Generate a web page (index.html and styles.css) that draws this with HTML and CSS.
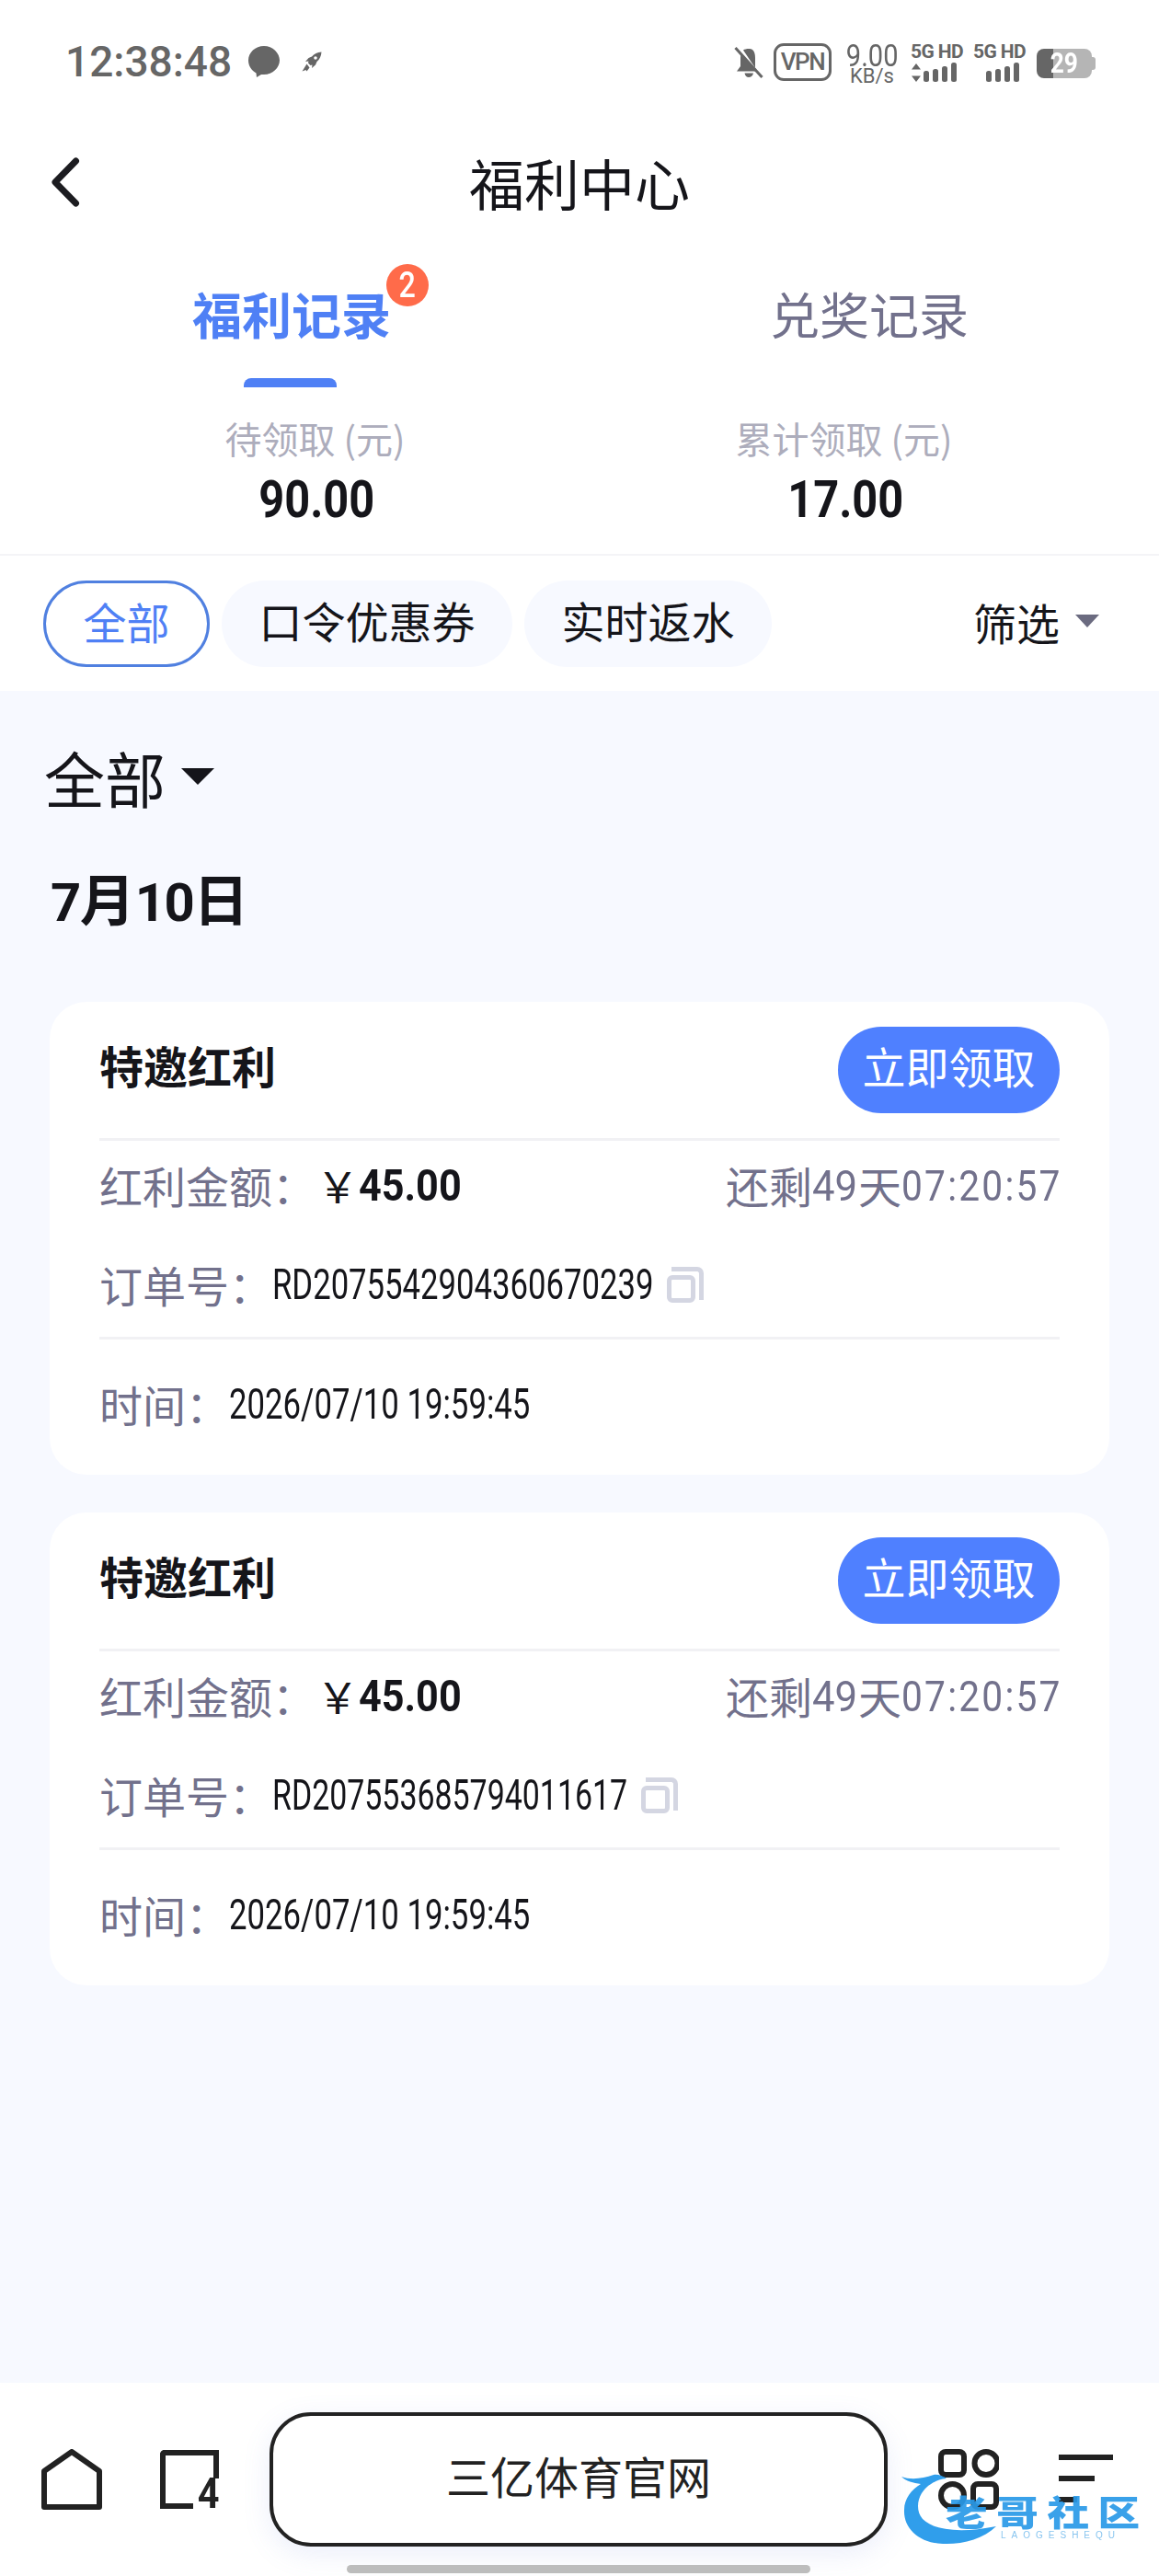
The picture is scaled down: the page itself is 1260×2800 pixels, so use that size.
FILE: index.html
```html
<!DOCTYPE html>
<html lang="zh-CN">
<head>
    <meta charset="UTF-8">
    <meta name="viewport" content="width=device-width, initial-scale=1.0">
    <title>福利中心</title>
    <link rel="stylesheet" href="styles.css">
</head>
<body>
    <div class="page">
        <header class="top">
            <div class="status">
                <div class="status_left">
                    <span class="clock">12:38:48</span>
                    <svg class="bubble" viewBox="0 0 34 34"><path d="M17 0C7.600 0 0 7 0 15.600c0 6.400 3.600 11.200 8.500 13.900l.5 4.500 5-3.100c1 .1 2 .2 3 .2 9.400 0 17-7.600 17-15.500S26.400 0 17 0z"/></svg>
                    <svg class="rocket" viewBox="0 0 22 22"><path d="M21.500.5c-4.500.3-8 2-10.500 5L7.500 7 4 11l3.500-.5-.5 2 2.500 2.500 2-.5L11 18l4-3.500 1.500-3.500c3-2.500 4.700-6 5-10.500zM15 5.200a1.800 1.800 0 1 1 0 3.600 1.800 1.800 0 0 1 0-3.600zM5.500 13.500L.5 21.500l4-1.500 1 1.500 3-4z"/></svg>
                </div>
                <div class="status_right">
                    <svg class="bell" viewBox="0 0 32 36"><path d="M16 3c-2.500 0-4.500.5-6 1.500L25.500 27.500H3L7 22v-9c0-1.500.2-3 .7-4.400L23 26V13c0-4-1-7.500-3-9-1-.7-2.500-1-4-1zM11.500 29.500c.5 3 2.500 4.500 4.500 4.500s4.500-1.500 5-4.500z"/><path d="M1.500 2L30.500 34" stroke="#666" stroke-width="3" fill="none"/></svg>
                    <span class="vpn">VPN</span>
                    <div class="speed"><span class="speed_num">9.00</span><span class="speed_unit">KB/s</span></div>
                    <div class="signal">
                        <span class="signal_name">5G HD</span>
                        <svg viewBox="0 0 57 22"><path d="M6 1l5 6.500H1zM6 21l5-6.500H1z"/><rect x="14" y="9" width="6" height="12" rx="2.500"/><rect x="24" y="7" width="6" height="14" rx="2.500"/><rect x="34" y="4" width="6" height="17" rx="2.500"/><rect x="44" y="0" width="6" height="21" rx="2.500"/></svg>
                    </div>
                    <div class="signal signal_last">
                        <span class="signal_name">5G HD</span>
                        <svg viewBox="0 0 57 22"><rect x="14" y="9" width="6" height="12" rx="2.500"/><rect x="24" y="7" width="6" height="14" rx="2.500"/><rect x="34" y="4" width="6" height="17" rx="2.500"/><rect x="44" y="0" width="6" height="21" rx="2.500"/></svg>
                    </div>
                    <div class="battery"><span class="battery_num">29</span></div>
                </div>
            </div>

            <div class="navbar">
                <svg class="back" viewBox="0 0 32 54"><path d="M27.500 4L5 27l22.500 23" fill="none" stroke="#1c1c20" stroke-width="7" stroke-linecap="round" stroke-linejoin="round"/></svg>
                <h1 class="navbar_title">福利中心</h1>
            </div>

            <div class="tabs">
                <div class="tab tab_active">
                    <span class="tab_label">福利记录<span class="tab_badge"><span class="tab_badge_num">2</span></span></span>
                </div>
                <div class="tab"><span class="tab_label">兑奖记录</span></div>
            </div>

            <div class="stats">
                <div class="stat">
                    <div class="stat_label">待领取 (元)</div>
                    <div class="stat_value">90.00</div>
                </div>
                <div class="stat">
                    <div class="stat_label">累计领取 (元)</div>
                    <div class="stat_value">17.00</div>
                </div>
            </div>

            <div class="filters">
                <span class="chip chip_active">全部</span>
                <span class="chip">口令优惠券</span>
                <span class="chip">实时返水</span>
                <span class="filters_more">筛选<i class="caret"></i></span>
            </div>
        </header>

        <main class="list">
            <div class="list_type">全部<i class="caret caret_big"></i></div>
            <div class="list_date"><span class="date_num">7</span>月<span class="date_num">10</span>日</div>

            <section class="card">
                <div class="card_head">
                    <span class="card_title">特邀红利</span>
                    <span class="card_btn">立即领取</span>
                </div>
                <div class="card_body">
                    <div class="row">
                        <span class="row_label">红利金额：</span>
                        <span class="yen">￥</span><span class="amount">45.00</span>
                        <span class="countdown">还剩<span class="num num_days">49</span>天<span class="num num_time">07:20:57</span></span>
                    </div>
                    <div class="row">
                        <span class="row_label">订单号：</span>
                        <span class="row_value order_long">RD2075542904360670239</span>
                        <i class="copy"></i>
                    </div>
                </div>
                <div class="card_foot">
                    <div class="row">
                        <span class="row_label">时间：</span>
                        <span class="row_value time_value">2026/07/10 19:59:45</span>
                    </div>
                </div>
            </section>

            <section class="card">
                <div class="card_head">
                    <span class="card_title">特邀红利</span>
                    <span class="card_btn">立即领取</span>
                </div>
                <div class="card_body">
                    <div class="row">
                        <span class="row_label">红利金额：</span>
                        <span class="yen">￥</span><span class="amount">45.00</span>
                        <span class="countdown">还剩<span class="num num_days">49</span>天<span class="num num_time">07:20:57</span></span>
                    </div>
                    <div class="row">
                        <span class="row_label">订单号：</span>
                        <span class="row_value order_short">RD207553685794011617</span>
                        <i class="copy"></i>
                    </div>
                </div>
                <div class="card_foot">
                    <div class="row">
                        <span class="row_label">时间：</span>
                        <span class="row_value time_value">2026/07/10 19:59:45</span>
                    </div>
                </div>
            </section>
        </main>

        <footer class="bottom">
            <svg class="bottom_icon" viewBox="0 0 66 66"><path d="M3 24L33 3l30 21v39H3z" fill="none" stroke="#222" stroke-width="6" stroke-linejoin="round"/></svg>
            <div class="tabs_icon"><span class="tabs_count">4</span></div>
            <div class="address">三亿体育官网</div>
            <svg class="bottom_icon" viewBox="0 0 66 66"><g fill="none" stroke="#222" stroke-width="6"><rect x="3" y="3" width="25" height="25" rx="5"/><circle cx="52" cy="15.500" r="12.500"/><circle cx="15.500" cy="50.500" r="12.500"/><rect x="38" y="38" width="25" height="25" rx="5"/></g></svg>
            <div class="menu_icon"><i></i><i></i><i></i></div>
        </footer>
        <div class="home_bar"></div>

        <div class="watermark">
            <svg viewBox="0 0 120 84"><path d="M1 4C12 8 24 6 36 2c4-1 10 1 14 4-12 1-22 8-27 16-5 8-6 20 1 28 12 12 40 16 80 8-14 14-38 20-58 19C20 76 3 60 4 40c0-12 8-22 18-28C14 11 6 9 1 4z" fill="#1f96ea"/></svg>
            <span class="watermark_name">老哥社区</span>
            <span class="watermark_sub">LAOGESHEQU</span>
        </div>
    </div>
</body>
</html>
```

FILE: styles.css
```css
* {
    box-sizing: border-box;
}
body {
    margin: 0;
    padding: 0;
    font-family: Roboto, "Noto Sans CJK SC", sans-serif;
    color: #15151a;
}
.page {
    position: relative;
    display: flex;
    flex-direction: column;
    width: 1260px;
    height: 2800px;
    overflow: hidden;
    background-color: #f7f9ff;
}

/* Status bar */
.top {
    background-color: #fff;
}
.status {
    display: flex;
    align-items: flex-start;
    justify-content: space-between;
    height: 140px;
    padding: 47px 70px 0 71px;
    color: #666;
}
.status_left {
    display: flex;
    align-items: center;
    height: 40px;
}
.clock {
    width: 177px;
    font-size: 46px;
    font-weight: 500;
    line-height: 40px;
    white-space: nowrap;
}
.bubble {
    width: 34px;
    height: 34px;
    margin-left: 22px;
    fill: #666;
}
.rocket {
    width: 22px;
    height: 22px;
    margin-left: 24px;
    fill: #666;
}
.status_right {
    display: flex;
    align-items: flex-start;
}
.bell {
    width: 32px;
    height: 36px;
    margin-top: 3px;
    fill: #666;
}
.vpn {
    width: 63px;
    height: 41px;
    margin-left: 11px;
    border: 3.5px solid #666;
    border-radius: 11px;
    font-size: 26px;
    font-weight: 500;
    line-height: 34px;
    letter-spacing: -1.500px;
    text-align: center;
}
.speed {
    display: flex;
    flex-direction: column;
    align-items: center;
    width: 56px;
    margin-left: 16px;
}
.speed_num {
    font-size: 33px;
    line-height: 27px;
    transform: scaleX(0.88);
}
.speed_unit {
    font-size: 22px;
    line-height: 17px;
}
.signal {
    display: flex;
    flex-direction: column;
    width: 57px;
    margin-left: 14px;
}
.signal_last {
    margin-left: 11px;
}
.signal_name {
    font-size: 21px;
    font-weight: 700;
    line-height: 18px;
    letter-spacing: -0.600px;
    white-space: nowrap;
}
.signal svg {
    width: 57px;
    height: 22px;
    margin-top: 3px;
    fill: #666;
}
.battery {
    position: relative;
    width: 60px;
    height: 32px;
    margin: 6px 3px 0 12px;
    border-radius: 8px;
    background: linear-gradient(90deg, #666 0 30%, #b5b5b5 30% 100%);
    color: #fff;
    text-align: center;
}
.battery_num {
    display: inline-block;
    font-size: 31px;
    font-weight: 700;
    line-height: 32px;
    transform: scaleX(0.85);
}
.battery::after {
    content: "";
    position: absolute;
    top: 9px;
    right: -4px;
    width: 4px;
    height: 14px;
    border-radius: 0 3px 3px 0;
    background-color: #b5b5b5;
}

/* Title */
.navbar {
    position: relative;
    display: flex;
    align-items: center;
    justify-content: center;
    height: 124px;
    padding-top: 4px;
}
.back {
    position: absolute;
    left: 55px;
    top: 31px;
    width: 32px;
    height: 54px;
}
.navbar_title {
    margin: 0;
    font-size: 60px;
    font-weight: 400;
    line-height: 80px;
}

/* Tabs */
.tabs {
    display: flex;
    height: 157px;
    padding: 0 0 0 4px;
}
.tab {
    position: relative;
    flex: 1;
    padding-top: 46px;
    font-size: 54px;
    line-height: 72px;
    text-align: center;
    color: #72718c;
}
.tab:first-child {
    flex: 0 0 626px;
}
.tab_label {
    position: relative;
    display: inline-block;
}
.tab_active {
    color: #4f80f5;
    font-weight: 700;
}
.tab_active::after {
    content: "";
    position: absolute;
    left: 261px;
    bottom: 0;
    width: 101px;
    height: 10px;
    border-radius: 8px 8px 0 0;
    background-color: #4f80f5;
}
.tab_badge {
    position: absolute;
    top: -23px;
    right: -41px;
    width: 46px;
    height: 46px;
    border-radius: 50%;
    background-color: #ff6b4a;
    color: #fff;
    font-size: 38px;
    font-weight: 500;
    line-height: 46px;
    text-align: center;
}
.tab_badge_num {
    display: inline-block;
    transform: scaleX(0.85);
}

/* Totals */
.stats {
    display: flex;
    height: 183px;
    padding: 0 55px;
    border-bottom: 2px solid #f4f4f7;
}
.stat {
    flex: 1;
    padding-top: 28px;
    text-align: center;
}
.stat_label {
    color: #adadbc;
    font-family: "Noto Sans CJK SC", sans-serif;
    font-size: 40px;
    line-height: 54px;
}
.stat_value {
    margin-top: 10px;
    padding-left: 4px;
    font-size: 56px;
    font-weight: 700;
    line-height: 60px;
    transform: scaleX(0.87);
}

/* Filters */
.filters {
    display: flex;
    align-items: flex-start;
    height: 147px;
    padding: 27px 65px 0 47px;
}
.chip {
    height: 94px;
    margin-right: 13px;
    padding: 0 40.500px;
    border-radius: 47px;
    background-color: #f7f9ff;
    font-size: 47px;
    line-height: 93px;
}
.chip_active {
    padding: 0 40.500px;
    border: 3px solid #5080e0;
    background-color: #fff;
    color: #4f80f5;
    line-height: 89px;
}
.filters_more {
    display: flex;
    align-items: center;
    height: 94px;
    margin-left: auto;
    padding-bottom: 6px;
    font-size: 47px;
}
.caret {
    display: block;
    width: 0;
    height: 0;
    margin-left: 17px;
    border-style: solid;
    border-width: 14px 13.500px 0;
    border-color: #6b6b80 transparent transparent;
}
.caret_big {
    margin-left: 17px;
    border-width: 18px 18px 0;
    border-color: #15151a transparent transparent;
}

/* List */
.list {
    flex: 1;
    padding: 0 54px;
}
.list_type {
    display: flex;
    align-items: center;
    height: 88px;
    margin: 49px 0 0 -6px;
    font-size: 66px;
}
.list_date {
    margin: 53px 0 0 1px;
    font-size: 60px;
    font-weight: 700;
    line-height: 80px;
}
.date_num {
    font-size: 58px;
    letter-spacing: -1.500px;
}
.card {
    height: 514px;
    margin-top: 41px;
    padding: 0 54px;
    border-radius: 40px;
    background-color: #fff;
}
.list_date + .card {
    margin-top: 68px;
}
.card_head {
    display: flex;
    align-items: center;
    justify-content: space-between;
    height: 151px;
    border-bottom: 3px solid #f1f1f4;
}
.card_title {
    margin-bottom: 12px;
    font-size: 48px;
    font-weight: 700;
}
.card_btn {
    width: 241px;
    height: 94px;
    border-radius: 47px;
    background-color: #4f80ff;
    color: #fff;
    font-size: 47px;
    line-height: 91px;
    text-align: center;
}
.card_body {
    display: flex;
    flex-direction: column;
    gap: 48px;
    height: 216px;
    padding-top: 17px;
    border-bottom: 3px solid #f1f1f4;
}
.card_foot {
    padding-top: 39px;
}
.row {
    display: flex;
    align-items: center;
    height: 60px;
}
.row_label {
    color: #72718c;
    font-size: 47px;
}
.row_value {
    padding-top: 2px;
    font-size: 46px;
    white-space: nowrap;
    transform-origin: left center;
}
.order_long {
    width: 414px;
    transform: scaleX(0.754);
}
.order_short {
    width: 386px;
    transform: scaleX(0.737);
}
.time_value {
    width: 326px;
    transform: scaleX(0.755);
}
.yen {
    margin-left: 1px;
    font-family: "Noto Sans CJK SC", sans-serif;
    font-size: 46px;
}
.amount {
    width: 110px;
    padding-top: 2px;
    font-size: 48px;
    font-weight: 700;
    white-space: nowrap;
    transform: scaleX(0.9);
    transform-origin: left center;
}
.countdown {
    display: flex;
    align-items: center;
    margin-left: auto;
    color: #72718c;
    font-size: 47px;
    white-space: nowrap;
}
.num {
    padding-top: 3px;
    font-size: 46px;
    transform-origin: left center;
}
.num_days {
    width: 50px;
    transform: scaleX(0.95);
}
.num_time {
    width: 172px;
    letter-spacing: 2.500px;
    transform: scaleX(0.885);
}
.copy {
    position: relative;
    display: block;
    width: 31px;
    height: 30px;
    margin: 12px 0 0 15px;
    border: 5px solid #d4d6e2;
    border-radius: 6px;
}
.copy::after {
    content: "";
    position: absolute;
    top: -14px;
    right: -14px;
    width: 30px;
    height: 31px;
    border-top: 5px solid #d4d6e2;
    border-right: 5px solid #d4d6e2;
    border-radius: 0 7px 0 0;
}

/* Bottom bar */
.bottom {
    display: flex;
    align-items: center;
    height: 210px;
    padding: 0 51px 0 45px;
    background-color: #fff;
}
.bottom_icon {
    flex: none;
    width: 66px;
    height: 66px;
}
.tabs_icon {
    position: relative;
    flex: none;
    width: 64px;
    height: 64px;
    margin: 0 0 0 63px;
    border: 6px solid #222;
    border-radius: 5px;
    border-right-color: transparent;
    border-bottom-color: transparent;
}
.tabs_icon::before {
    content: "";
    position: absolute;
    left: -6px;
    bottom: -6px;
    width: 36px;
    height: 6px;
    background-color: #222;
}
.tabs_icon::after {
    content: "";
    position: absolute;
    top: -6px;
    right: -6px;
    width: 6px;
    height: 31px;
    background-color: #222;
}
.tabs_count {
    position: absolute;
    right: -6px;
    bottom: -12px;
    color: #222;
    font-size: 46px;
    font-weight: 700;
    line-height: 46px;
    transform: scaleX(0.9);
    transform-origin: right center;
}
.address {
    flex: none;
    width: 672px;
    height: 146px;
    margin: 0 55px;
    border: 4px solid #222;
    border-radius: 45px;
    box-shadow: 0 8px 30px rgba(100, 120, 220, 0.13);
    color: #222;
    font-size: 48px;
    line-height: 138px;
    text-align: center;
}
.menu_icon {
    display: flex;
    flex-direction: column;
    gap: 17px;
    flex: none;
    width: 59px;
    margin: -2px 0 0 65px;
}
.menu_icon i {
    display: block;
    height: 6px;
    background-color: #222;
}
.menu_icon i:nth-child(2) {
    width: 39px;
}
.menu_icon i:nth-child(3) {
    width: 20px;
}
.home_bar {
    position: absolute;
    left: 377px;
    bottom: 3px;
    width: 504px;
    height: 9px;
    border-radius: 5px;
    background-color: #bdbdbd;
}

/* Site watermark over the bottom bar */
.watermark {
    position: absolute;
    left: 979px;
    top: 2688px;
    width: 261px;
    height: 84px;
    opacity: 0.92;
    filter: blur(0.6px);
}
.watermark svg {
    position: absolute;
    left: 0;
    top: 0;
    width: 120px;
    height: 84px;
}
.watermark_name {
    position: absolute;
    left: 49px;
    top: 19px;
    color: #2a9ae8;
    font-family: "Noto Sans CJK SC", sans-serif;
    font-size: 38px;
    font-weight: 900;
    line-height: 44px;
    letter-spacing: 8px;
    white-space: nowrap;
    transform: scaleX(1.2);
    transform-origin: left center;
}
.watermark_sub {
    position: absolute;
    left: 109px;
    top: 62px;
    color: #7fc0ee;
    font-family: "Liberation Sans", sans-serif;
    font-size: 10px;
    line-height: 12px;
    letter-spacing: 6px;
    white-space: nowrap;
}
```
